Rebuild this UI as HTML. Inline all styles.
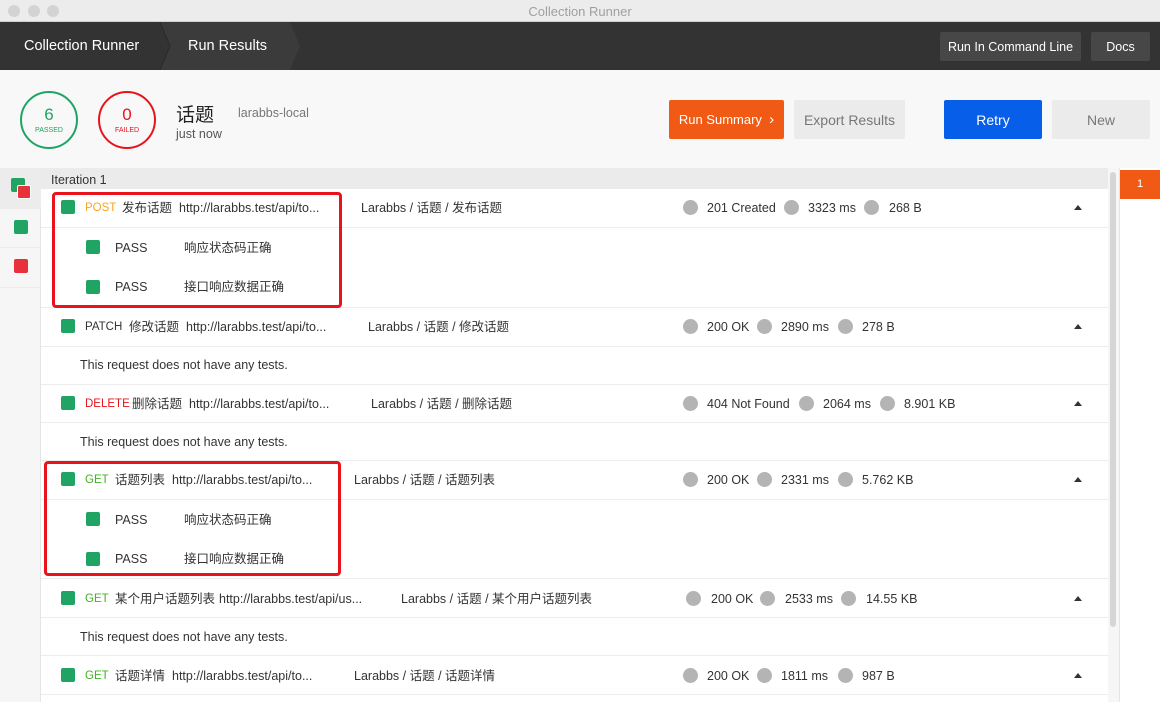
<!DOCTYPE html>
<html><head><meta charset="utf-8"><style>
*{margin:0;padding:0;box-sizing:border-box}
body{width:1160px;height:702px;overflow:hidden;background:#fff;font-family:"Liberation Sans","Noto Sans CJK SC",sans-serif;color:#333;position:relative}
.a{position:absolute;white-space:nowrap}
.t{font-size:12.5px;line-height:14px}
.m{font-size:11.5px;line-height:14px;position:absolute;white-space:nowrap}
.sq{position:absolute;width:14px;height:14px;border-radius:2px;background:#1fa464}
.dot{position:absolute;width:15px;height:15px;border-radius:50%;background:#b4b4b4}
.hl{position:absolute;left:41px;width:1067px;height:1px;background:#ececec}
.tri{position:absolute;width:0;height:0;border-left:4px solid transparent;border-right:4px solid transparent;border-bottom:5px solid #333}
.btn{position:absolute;height:39px;font-size:14px;display:flex;align-items:center;justify-content:center;border-radius:2px}
</style></head><body>
<div class="a" style="left:0;top:0;width:1160px;height:22px;background:#ececec;border-bottom:1px solid #d0d0d0"></div>
<div class="a" style="left:8px;top:5px;width:12px;height:12px;border-radius:50%;background:#d3d3d3"></div>
<div class="a" style="left:28px;top:5px;width:12px;height:12px;border-radius:50%;background:#d3d3d3"></div>
<div class="a" style="left:47px;top:5px;width:12px;height:12px;border-radius:50%;background:#d3d3d3"></div>
<div class="a" style="left:0;width:1160px;top:4px;text-align:center;font-size:13px;color:#a0a0a0">Collection Runner</div>
<div class="a" style="left:0;top:22px;width:1160px;height:48px;background:#333;box-shadow:0 2px 2px rgba(0,0,0,.3)"></div>
<svg class="a" style="left:150px;top:22px" width="150" height="48"><path d="M10 0 L20 24 L10 48 L140 48 L150 24 L140 0 Z" fill="#3b3b3b"/><path d="M10 0 L20 24 L10 48" stroke="#2a2a2a" fill="none"/></svg>
<div class="a" style="left:24px;top:38px;font-size:14.5px;color:#fff">Collection Runner</div>
<div class="a" style="left:188px;top:38px;font-size:14.5px;color:#fff">Run Results</div>
<div class="btn" style="left:940px;top:32px;width:141px;height:29px;background:#474747;color:#fff;font-size:12.5px">Run In Command Line</div>
<div class="btn" style="left:1091px;top:32px;width:59px;height:29px;background:#474747;color:#fff;font-size:12.5px">Docs</div>
<div class="a" style="left:0;top:70px;width:1160px;height:98px;background:#f8f8f8"></div>
<div class="a" style="left:20px;top:91px;width:58px;height:58px;border:2px solid #1fa464;border-radius:50%;text-align:center;color:#1fa464"><div style="font-size:17px;margin-top:12px">6</div><div style="font-size:7px;margin-top:2px">PASSED</div></div>
<div class="a" style="left:98px;top:91px;width:58px;height:58px;border:2px solid #e8131b;border-radius:50%;text-align:center;color:#e8131b"><div style="font-size:17px;margin-top:12px">0</div><div style="font-size:7px;margin-top:2px">FAILED</div></div>
<div class="a" style="left:176px;top:100px;font-size:19px;color:#222">话题</div>
<div class="a" style="left:238px;top:106px;font-size:12.5px;color:#777">larabbs-local</div>
<div class="a" style="left:176px;top:127px;font-size:12.5px;color:#555">just now</div>
<div class="btn" style="left:669px;top:100px;width:115px;background:#f05a14;color:#fff;font-size:13px">Run Summary&nbsp;&nbsp;<span style="font-size:15px">›</span></div>
<div class="btn" style="left:794px;top:100px;width:111px;background:#ebebeb;color:#777">Export Results</div>
<div class="btn" style="left:944px;top:100px;width:98px;background:#075ee8;color:#fff">Retry</div>
<div class="btn" style="left:1052px;top:100px;width:98px;background:#ebebeb;color:#777">New</div>
<div class="a" style="left:0;top:168px;width:41px;height:534px;background:#f6f6f6;border-right:1px solid #e5e5e5"></div>
<div class="a" style="left:0;top:168px;width:41px;height:40px;background:#ececec"></div>
<div class="sq" style="left:11px;top:178px"></div>
<div class="sq" style="left:17px;top:185px;background:#e8323a;border:1px solid #fff"></div>
<div class="hl" style="left:0;width:41px;top:208px"></div>
<div class="sq" style="left:14px;top:220px"></div>
<div class="hl" style="left:0;width:41px;top:247px"></div>
<div class="sq" style="left:14px;top:259px;background:#e8323a"></div>
<div class="hl" style="left:0;width:41px;top:287px"></div>
<div class="a" style="left:41px;top:168px;width:1067px;height:21px;background:#ebebeb"></div>
<div class="a t" style="left:51px;top:173px">Iteration 1</div>
<div class="a" style="left:1108px;top:168px;width:11px;height:534px;background:#f6f6f6"></div>
<div class="a" style="left:1110px;top:172px;width:6px;height:455px;background:#d6d6d6;border-radius:3px"></div>
<div class="a" style="left:1119px;top:168px;width:41px;height:534px;background:#fff;border-left:1px solid #e5e5e5"></div>
<div class="a" style="left:1120px;top:170px;width:40px;height:29px;background:#f05a14;color:#fff;font-size:11px;text-align:center;line-height:29px">1</div>

<div class="hl" style="top:227px"></div><div class="hl" style="top:307px"></div><div class="hl" style="top:346px"></div>
<div class="hl" style="top:384px"></div><div class="hl" style="top:422px"></div><div class="hl" style="top:460px"></div>
<div class="hl" style="top:499px"></div><div class="hl" style="top:578px"></div><div class="hl" style="top:617px"></div>
<div class="hl" style="top:655px"></div><div class="hl" style="top:694px"></div>

<!-- row1 -->
<div class="sq" style="left:61px;top:200px"></div>
<div class="m" style="left:85px;top:201px;color:#f5a623">POST</div>
<div class="a t" style="left:122px;top:201px">发布话题</div>
<div class="a t" style="left:179px;top:201px">http://larabbs.test/api/to...</div>
<div class="a t" style="left:361px;top:201px">Larabbs / 话题 / 发布话题</div>
<div class="dot" style="left:683px;top:200px"></div><div class="a t" style="left:707px;top:201px">201 Created</div>
<div class="dot" style="left:784px;top:200px"></div><div class="a t" style="left:808px;top:201px">3323 ms</div>
<div class="dot" style="left:864px;top:200px"></div><div class="a t" style="left:889px;top:201px">268 B</div>
<div class="tri" style="left:1074px;top:205px"></div>
<div class="sq" style="left:86px;top:240px"></div><div class="a t" style="left:115px;top:241px">PASS</div><div class="a t" style="left:184px;top:241px">响应状态码正确</div>
<div class="sq" style="left:86px;top:280px"></div><div class="a t" style="left:115px;top:280px">PASS</div><div class="a t" style="left:184px;top:280px">接口响应数据正确</div>
<div class="a" style="left:52px;top:192px;width:290px;height:116px;border:3px solid #e8131b;border-radius:4px"></div>

<!-- row2 -->
<div class="sq" style="left:61px;top:319px"></div>
<div class="m" style="left:85px;top:320px">PATCH</div>
<div class="a t" style="left:129px;top:320px">修改话题</div>
<div class="a t" style="left:186px;top:320px">http://larabbs.test/api/to...</div>
<div class="a t" style="left:368px;top:320px">Larabbs / 话题 / 修改话题</div>
<div class="dot" style="left:683px;top:319px"></div><div class="a t" style="left:707px;top:320px">200 OK</div>
<div class="dot" style="left:757px;top:319px"></div><div class="a t" style="left:781px;top:320px">2890 ms</div>
<div class="dot" style="left:838px;top:319px"></div><div class="a t" style="left:862px;top:320px">278 B</div>
<div class="tri" style="left:1074px;top:324px"></div>
<div class="a t" style="left:80px;top:358px">This request does not have any tests.</div>

<!-- row3 -->
<div class="sq" style="left:61px;top:396px"></div>
<div class="m" style="left:85px;top:397px;color:#e8131b">DELETE</div>
<div class="a t" style="left:132px;top:397px">删除话题</div>
<div class="a t" style="left:189px;top:397px">http://larabbs.test/api/to...</div>
<div class="a t" style="left:371px;top:397px">Larabbs / 话题 / 删除话题</div>
<div class="dot" style="left:683px;top:396px"></div><div class="a t" style="left:707px;top:397px">404 Not Found</div>
<div class="dot" style="left:799px;top:396px"></div><div class="a t" style="left:823px;top:397px">2064 ms</div>
<div class="dot" style="left:880px;top:396px"></div><div class="a t" style="left:904px;top:397px">8.901 KB</div>
<div class="tri" style="left:1074px;top:401px"></div>
<div class="a t" style="left:80px;top:435px">This request does not have any tests.</div>

<!-- row4 -->
<div class="sq" style="left:61px;top:472px"></div>
<div class="m" style="left:85px;top:473px;color:#40b322">GET</div>
<div class="a t" style="left:115px;top:473px">话题列表</div>
<div class="a t" style="left:172px;top:473px">http://larabbs.test/api/to...</div>
<div class="a t" style="left:354px;top:473px">Larabbs / 话题 / 话题列表</div>
<div class="dot" style="left:683px;top:472px"></div><div class="a t" style="left:707px;top:473px">200 OK</div>
<div class="dot" style="left:757px;top:472px"></div><div class="a t" style="left:781px;top:473px">2331 ms</div>
<div class="dot" style="left:838px;top:472px"></div><div class="a t" style="left:862px;top:473px">5.762 KB</div>
<div class="tri" style="left:1074px;top:477px"></div>
<div class="sq" style="left:86px;top:512px"></div><div class="a t" style="left:115px;top:513px">PASS</div><div class="a t" style="left:184px;top:513px">响应状态码正确</div>
<div class="sq" style="left:86px;top:552px"></div><div class="a t" style="left:115px;top:552px">PASS</div><div class="a t" style="left:184px;top:552px">接口响应数据正确</div>
<div class="a" style="left:44px;top:461px;width:297px;height:115px;border:3px solid #e8131b;border-radius:4px"></div>

<!-- row5 -->
<div class="sq" style="left:61px;top:591px"></div>
<div class="m" style="left:85px;top:592px;color:#40b322">GET</div>
<div class="a t" style="left:115px;top:592px">某个用户话题列表</div>
<div class="a t" style="left:219px;top:592px">http://larabbs.test/api/us...</div>
<div class="a t" style="left:401px;top:592px">Larabbs / 话题 / 某个用户话题列表</div>
<div class="dot" style="left:686px;top:591px"></div><div class="a t" style="left:711px;top:592px">200 OK</div>
<div class="dot" style="left:760px;top:591px"></div><div class="a t" style="left:785px;top:592px">2533 ms</div>
<div class="dot" style="left:841px;top:591px"></div><div class="a t" style="left:866px;top:592px">14.55 KB</div>
<div class="tri" style="left:1074px;top:596px"></div>
<div class="a t" style="left:80px;top:630px">This request does not have any tests.</div>

<!-- row6 -->
<div class="sq" style="left:61px;top:668px"></div>
<div class="m" style="left:85px;top:669px;color:#40b322">GET</div>
<div class="a t" style="left:115px;top:669px">话题详情</div>
<div class="a t" style="left:172px;top:669px">http://larabbs.test/api/to...</div>
<div class="a t" style="left:354px;top:669px">Larabbs / 话题 / 话题详情</div>
<div class="dot" style="left:683px;top:668px"></div><div class="a t" style="left:707px;top:669px">200 OK</div>
<div class="dot" style="left:757px;top:668px"></div><div class="a t" style="left:781px;top:669px">1811 ms</div>
<div class="dot" style="left:838px;top:668px"></div><div class="a t" style="left:862px;top:669px">987 B</div>
<div class="tri" style="left:1074px;top:673px"></div>
</body></html>
